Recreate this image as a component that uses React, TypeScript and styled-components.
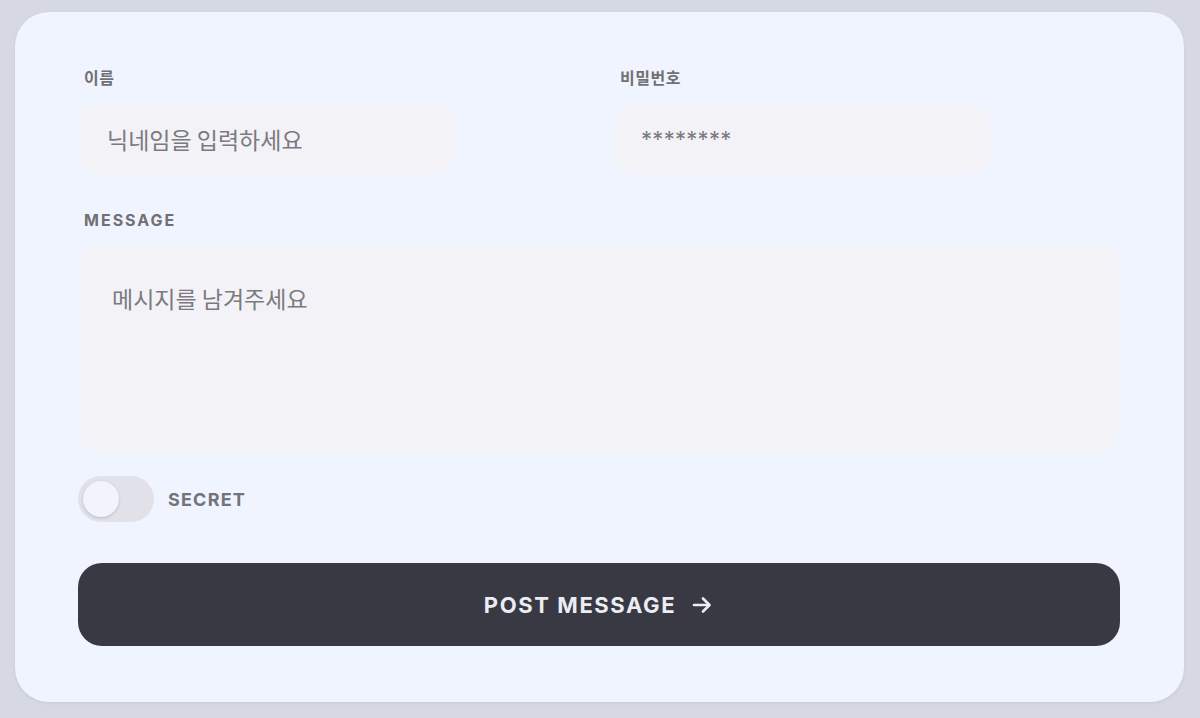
import React from "react";
import styled, { createGlobalStyle } from "styled-components";

const Global = createGlobalStyle`
  html, body { margin: 0; padding: 0; }
  body {
    background: #d6d9e3;
    font-family: Inter, "Noto Sans CJK KR", sans-serif;
    width: 1200px;
    height: 718px;
    overflow: hidden;
  }
`;

const Page = styled.div`
  padding: 12px 16px 16px 15px;
  box-sizing: border-box;
  height: 718px;
`;

const Card = styled.form`
  box-sizing: border-box;
  height: 690px;
  background: #f0f4fe;
  border-radius: 34px;
  box-shadow: 0 1px 3px rgba(120, 125, 150, 0.18);
  padding: 56px 64px 0 63px;
  display: flex;
  flex-direction: column;
`;

const Row = styled.div`
  display: grid;
  grid-template-columns: 1fr 1fr;
  column-gap: 30px;
`;

const Field = styled.div`
  display: flex;
  flex-direction: column;
`;

const Label = styled.label<{ $caps?: boolean }>`
  font-family: Inter, "Noto Sans CJK KR", sans-serif;
  font-weight: 700;
  font-size: 16px;
  letter-spacing: ${(p) => (p.$caps ? "2px" : "0.5px")};
  color: #707075;
  padding-left: 6px;
  line-height: 20px;
  height: 20px;
  margin-bottom: ${(p) => (p.$caps ? "15px" : "16px")};
`;

const Input = styled.input`
  box-sizing: border-box;
  width: 377px;
  height: 70px;
  border: none;
  outline: none;
  border-radius: 22px;
  background: #f3f2f7;
  padding: 0 0 0 29px;
  font-family: "Noto Sans CJK KR", Inter, sans-serif;
  font-size: 23px;
  color: #77777c;
  &::placeholder { color: #7a7a80; }
`;

const PasswordText = styled(Input)`
  font-family: Inter, sans-serif;
  font-size: 22px;
  letter-spacing: 0.3px;
  padding-left: 27px;
`;

const MessageField = styled(Field)`
  margin-top: 36px;
`;

const TextArea = styled.textarea`
  box-sizing: border-box;
  width: 100%;
  height: 207px;
  border: none;
  outline: none;
  resize: none;
  border-radius: 24px;
  background: #f3f2f7;
  padding: 37px 34px;
  font-family: "Noto Sans CJK KR", Inter, sans-serif;
  font-size: 23px;
  line-height: 32px;
  &::placeholder { color: #7a7a80; }
`;

const ToggleRow = styled.div`
  display: flex;
  align-items: center;
  gap: 14px;
  margin-top: 24px;
`;

const Track = styled.div`
  width: 76px;
  height: 46px;
  border-radius: 23px;
  background: #e1e1e9;
  position: relative;
`;

const Knob = styled.div`
  position: absolute;
  left: 5px;
  top: 5px;
  width: 36px;
  height: 36px;
  border-radius: 50%;
  background: #f1f4fd;
  box-shadow: 0 1px 3px rgba(0, 0, 0, 0.18);
`;

const ToggleText = styled.span`
  font-family: Inter, sans-serif;
  font-weight: 700;
  font-size: 18px;
  letter-spacing: 1.2px;
  color: #737378;
`;

const Button = styled.button`
  margin-top: 41px;
  height: 83px;
  width: 100%;
  border: none;
  border-radius: 24px;
  background: #393943;
  color: #ececf3;
  display: flex;
  align-items: center;
  justify-content: center;
  gap: 14px;
  font-family: Inter, sans-serif;
  font-weight: 700;
  font-size: 22px;
  letter-spacing: 1.6px;
  cursor: pointer;
`;

const Arrow = () => (
  <svg width="24" height="24" viewBox="0 0 24 24" fill="none" stroke="#ececf3" strokeWidth="2.6" strokeLinecap="round" strokeLinejoin="round">
    <path d="M4 12h15" />
    <path d="M13 5.5l6.5 6.5-6.5 6.5" />
  </svg>
);

export default function App() {
  return (
    <>
      <Global />
      <Page>
        <Card onSubmit={(e) => e.preventDefault()}>
          <Row>
            <Field>
              <Label>이름</Label>
              <Input placeholder="닉네임을 입력하세요" />
            </Field>
            <Field>
              <Label>비밀번호</Label>
              <PasswordText placeholder="********" />
            </Field>
          </Row>
          <MessageField>
            <Label $caps>MESSAGE</Label>
            <TextArea placeholder="메시지를 남겨주세요" />
          </MessageField>
          <ToggleRow>
            <Track>
              <Knob />
            </Track>
            <ToggleText>SECRET</ToggleText>
          </ToggleRow>
          <Button type="submit">
            POST MESSAGE
            <Arrow />
          </Button>
        </Card>
      </Page>
    </>
  );
}
